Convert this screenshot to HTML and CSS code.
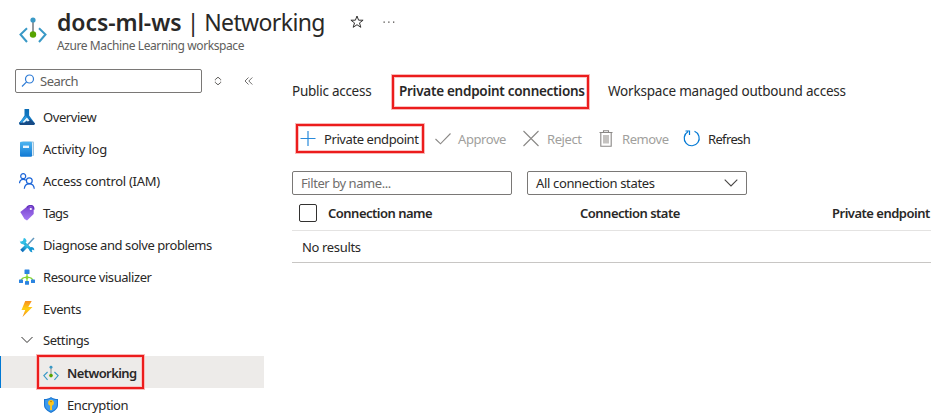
FILE: index.html
```html
<!DOCTYPE html>
<html lang="en">
<head>
<meta charset="utf-8">
<title>docs-ml-ws | Networking</title>
<link rel="stylesheet" href="styles.css">
</head>
<body>
<svg class="defs" width="0" height="0" aria-hidden="true">
  <defs>
    <linearGradient id="book" x1="0" y1="0" x2="0" y2="1"><stop offset="0" stop-color="#4cb4f0"/><stop offset="1" stop-color="#1079d4"/></linearGradient>
    <linearGradient id="flask" x1="0" y1="0" x2="0" y2="1"><stop offset="0" stop-color="#0a6cb5"/><stop offset="1" stop-color="#1c86d1"/></linearGradient>
    <linearGradient id="tag" x1="0" y1="0" x2="0" y2="1"><stop offset="0" stop-color="#7a45d0"/><stop offset="1" stop-color="#a67af4"/></linearGradient>
    <linearGradient id="bolt" x1="0" y1="0" x2="0" y2="1"><stop offset="0" stop-color="#f78d1e"/><stop offset=".5" stop-color="#ffd00f"/><stop offset="1" stop-color="#f78d1e"/></linearGradient>
    <linearGradient id="tool" x1="1" y1="0" x2="0" y2="1"><stop offset="0" stop-color="#32c8e8"/><stop offset="1" stop-color="#0b67b8"/></linearGradient>
    <symbol id="net" viewBox="0 0 28 28">
      <path d="M8 12.200 1.500 18.500 8 26M20 12.200l6.500 6.300L20 26" fill="none" stroke="#3999c6" stroke-width="2"/>
      <path d="M14 4v15" stroke="#8a8f94" stroke-width="1.800"/>
      <circle cx="14" cy="4" r="2.600" fill="#3999c6"/><circle cx="14" cy="18.500" r="3.200" fill="#57a300"/>
    </symbol>
  </defs>
</svg>
<div class="page">
  <header class="header">
    <svg class="header-icon" viewBox="0 0 28 28"><use href="#net"/></svg>
    <div class="heading">
      <h1><b>docs-ml-ws</b><span class="section"> | Networking</span></h1>
      <p>Azure Machine Learning workspace</p>
    </div>
    <svg class="star" viewBox="0 0 14 14"><path d="M7 1l1.600 4.200h4.500L9.500 7.900l1.300 4.400L7 9.700l-3.800 2.600 1.300-4.400L.9 5.200h4.500z"/></svg>
    <svg class="dots" viewBox="0 0 12 2"><path d="M.5 .5h1.300v1.300H.5zM5.200 .5h1.300v1.300H5.200zM10 .5h1.300v1.300H10z"/></svg>
  </header>
  <div class="body">
    <aside class="sidebar">
      <div class="search-row">
        <div class="search">
          <svg viewBox="0 0 14 14"><circle cx="8.500" cy="5" r="4"/><path d="M5.600 7.800 1 12.500"/></svg>
          <span>Search</span>
        </div>
        <svg class="sorter" viewBox="0 0 8 10"><path d="M1.300 4.300V3.500L4 1.200l2.700 2.300v.8M1.300 5.700v.8L4 8.800l2.700-2.300v-.8"/></svg>
        <svg class="collapse" viewBox="0 0 9 8"><path d="M4.500 .5 1 4l3.500 3.500M8.300 .5 4.800 4l3.500 3.500"/></svg>
      </div>
      <nav>
        <a class="item tight"><svg viewBox="0 0 16 16"><path d="M5.500 0h4.600v6.500L16 14.500 15 16H1l-1-1.500 5.500-8z" fill="url(#flask)"/><path d="M0 13.700 2 12l4 1.500 5-3.500 5 4.500L15 16H1z" fill="#174a85"/><path d="M3.200 13.200 7.800 8.200l2.800 3.600-2 .8-1-1.200-2.600 2.400z" fill="#e3f3fd"/><path d="M.6 13.200 6.500 7l1.700.9L2.600 14z" fill="#2b9be0"/></svg><span>Overview</span></a>
        <a class="item loose"><svg viewBox="0 0 16 16"><rect x="3" y=".5" width="12" height="14.500" rx="1" fill="#9cc3dd"/><rect x="3" y="1.500" width="10.800" height="13" fill="#e8f3fa"/><rect x="1" y=".8" width="12" height="15" rx="1" fill="url(#book)"/><rect x="4" y="4.600" width="6" height="2.400" fill="#eaf6ff"/></svg><span>Activity log</span></a>
        <a class="item iam"><svg viewBox="0 0 16 16"><g fill="none" stroke="#1b65d8" stroke-width="1.200"><circle cx="4.200" cy="3.200" r="2.500"/><path d="M.5 10.200C.7 7.700 2.200 6.300 4.200 6.300c1.100 0 2 .4 2.700 1"/><circle cx="10.300" cy="7.800" r="2.900"/><path d="M5.300 15.700c.3-3.200 2.300-4.900 5-4.900s4.700 1.700 5 4.900"/></g></svg><span>Access control (IAM)</span></a>
        <a class="item tags"><svg viewBox="0 0 16 16"><path d="M1.300 7 8.500 1.300h4.500L14.700 3v6L8 15.500 5.500 14z" fill="url(#tag)"/><path d="M8 2.500C9.500.2 12.500-.2 14 1.500c.8 1 .9 2 .7 3.200" fill="none" stroke="#6330bd" stroke-width="1.400"/><circle cx="11.800" cy="4" r="1.100" fill="#fff"/></svg><span>Tags</span></a>
        <a class="item tight"><svg viewBox="0 0 16 16"><path d="M3.500 4.500 12.500 13" stroke="#23addb" stroke-width="2.800"/><path d="M4.800 .9 4 3.800 1.500 4.700.8 3.500C.8 6.500 3 7.800 5.500 6.900L7.500 4.500C7.700 2.500 6.500 1.100 4.800 .9z" fill="#32bfe5"/><path d="M10.200 11.800 12 10c2.500 0 3.500 1.500 3.200 3.500L13.700 12.600l-1 1 .8 1.700c-2 .1-3.500-1.300-3.300-3.500z" fill="#1495d2"/><path d="M15 1 7.500 9" stroke="#6097bd" stroke-width="1.500"/><path d="M8.300 8.300 2.500 14" stroke="url(#tool)" stroke-width="3.500"/></svg><span>Diagnose and solve problems</span></a>
        <a class="item tight"><svg viewBox="0 0 16 16"><path d="M8 4.500v8M2 12c.2-2.700 2-3.500 6-3.800 4 .3 5.800 1.100 6 3.800" fill="none" stroke="#86d633" stroke-width="1.300"/><g fill="#2b84e0"><rect x="5.500" y=".5" width="5" height="4.500" rx=".5"/><rect x="0" y="10.500" width="4" height="3.500" rx=".5"/><rect x="6" y="12" width="4" height="3.700" rx=".5"/><rect x="12" y="10.500" width="4" height="3.500" rx=".5"/></g><circle cx="8" cy="8.600" r="1.500" fill="#86d633"/></svg><span>Resource visualizer</span></a>
        <a class="item"><svg viewBox="0 0 16 16"><path d="M6.200 0h6.500L9.300 6h4.200L3.500 16l2.700-7H2.500z" fill="url(#bolt)"/></svg><span>Events</span></a>
        <a class="item group tight"><svg viewBox="0 0 16 16"><path d="M2.500 5 8 10.500 13.500 5" fill="none" stroke="#323130" stroke-width="1"/></svg><span>Settings</span></a>
        <a class="item child active"><svg viewBox="0 0 28 28"><use href="#net"/></svg><span>Networking</span><i class="mark mark-nav"></i></a>
        <a class="item child tight"><svg viewBox="0 0 16 16"><path d="M8 0c2 1.600 4 2 7 2.100v6C15 12 11.500 14.500 8 16 4.500 14.500 1 12 1 8.100v-6C4 2 6 1.600 8 0z" fill="#1b76d1"/><path d="M8 1.300c1.800 1.300 3.600 1.700 5.900 1.800v5c0 3.200-2.800 5.300-5.900 6.600-3.100-1.300-5.900-3.400-5.900-6.600v-5c2.300-.1 4.100-.5 5.900-1.800z" fill="#3d9bee"/><circle cx="8" cy="5.800" r="2.900" fill="#ffc61a"/><path d="M7.100 8h1.900v4.300l-1 1-.9-1z" fill="#ffc61a"/><circle cx="8" cy="4.500" r=".8" fill="#b37400"/></svg><span>Encryption</span></a>
      </nav>
    </aside>
    <main class="main">
      <div class="tabs">
        <span class="tab">Public access</span>
        <span class="tab selected"><span>Private endpoint connections</span><i class="mark mark-tab"></i></span>
        <span class="tab">Workspace managed outbound access</span>
      </div>
      <div class="toolbar">
        <span class="cmd c1"><svg viewBox="0 0 18 18"><path d="M9 1v15M1.500 8.500h15" stroke="#2a8bdb" stroke-width="1.200"/></svg><span>Private endpoint</span><i class="mark mark-cmd"></i></span>
        <span class="cmd c2 off"><svg viewBox="0 0 18 18"><path d="M1.500 9 6.500 13.800 16.500 3.500"/></svg><span>Approve</span></span>
        <span class="cmd c3 off"><svg viewBox="0 0 18 18"><path d="M1.500 1l15 15M16.500 1l-15 15"/></svg><span>Reject</span></span>
        <span class="cmd c4 off"><svg viewBox="0 0 18 18"><path d="M2.500 2.500h13M6.500 2.300V.7h5v1.600M3.800 2.700v13.600h10.400V2.700"/><path d="M6 5h6v8.500H6z" fill="#c4c2c0" stroke="none"/></svg><span>Remove</span></span>
        <span class="cmd c5"><svg viewBox="0 0 18 18"><path d="M4.900 1.800A7.500 7.500 0 1 0 11.500 1.300M2.500 1h4v4" fill="none" stroke="#0078d4" stroke-width="1.200"/></svg><span>Refresh</span></span>
      </div>
      <div class="filters">
        <div class="field name"><span>Filter by name...</span></div>
        <div class="field state"><span>All connection states</span><svg viewBox="0 0 14 8"><path d="M.7 .7 7 7 13.300 .7"/></svg></div>
      </div>
      <div class="grid">
        <div class="grid-head">
          <i class="check"></i>
          <span class="col">Connection name</span><span class="col">Connection state</span><span>Private endpoint</span>
        </div>
        <div class="grid-row"><span>No results</span></div>
      </div>
    </main>
  </div>
</div>
</body>
</html>
```
FILE: styles.css
```css
* { box-sizing: border-box; }
body { margin: 0; background: #fff; color: #292827; font: 13px/18px "Noto Sans", "Open Sans", sans-serif; letter-spacing: -0.35px; overflow: hidden; }
svg { display: block; flex: none; }
.defs { position: absolute; }
.page { width: 931px; height: 417px; overflow: hidden; }
span { white-space: nowrap; }

.header { display: flex; height: 61px; padding-left: 19px; }
.header-icon { width: 28px; height: 28px; margin-top: 16px; }
.heading { width: 293px; margin-left: 10px; padding-top: 7px; }
.heading h1 { margin: 0; font-size: 23px; line-height: 30px; font-weight: 400; white-space: nowrap; }
.heading h1 b { font-weight: 600; letter-spacing: -0.08px; }
.section { letter-spacing: -0.62px; }
.heading p { margin: 0; color: #605e5c; font-size: 12px; line-height: 18px; letter-spacing: -0.41px; }
.star { width: 14px; height: 14px; margin-top: 15px; fill: none; stroke: #323130; stroke-width: 1; }
.dots { width: 12px; height: 2px; margin: 21px 0 0 19px; fill: #484644; }

.body { display: flex; }
.sidebar { width: 264px; flex: none; }
.search-row { display: flex; align-items: center; height: 40px; padding: 0 0 1px 15px; }
.search { display: flex; align-items: center; width: 187px; height: 24px; border: 1px solid #7a7876; border-radius: 2px; padding-left: 5px; color: #605e5c; letter-spacing: -0.5px; }
.search svg { width: 14px; height: 14px; margin-right: 5px; fill: none; stroke: #2f7cd6; stroke-width: 1.2; }
.sorter { width: 8px; height: 10px; margin-left: 12px; fill: none; stroke: #605e5c; }
.collapse { width: 9px; height: 8px; margin-left: 22px; fill: none; stroke: #605e5c; stroke-width: .9; }
.item { display: flex; align-items: center; height: 32px; padding-left: 19px; position: relative; }
.item svg { width: 16px; height: 16px; margin-right: 8px; }
.tight { letter-spacing: -0.43px; }
.loose { letter-spacing: -0.2px; }
.iam { letter-spacing: -0.3px; }
.tags { letter-spacing: -0.7px; }
.group { height: 31px; padding-bottom: 1px; }
.child { padding-left: 43px; padding-top: 2px; }
.active { background: #edebe9; font-weight: 600; letter-spacing: -0.58px; box-shadow: inset 1px 0 #0078d4; }
.mark { position: absolute; border: 2px solid #ec1c1c; box-shadow: 0 0 0 1px #f9b9b9, inset 0 0 0 1px #f9c4c4; }
.mark-nav { left: 37px; top: -1px; width: 107px; height: 34px; }

.main { flex: 1; min-width: 0; padding-left: 28px; overflow: hidden; }
.tabs { display: flex; height: 61px; padding-top: 14px; font-size: 13.5px; letter-spacing: -0.27px; }
.tab { position: relative; height: 34px; padding-top: 7px; }
.tab:nth-child(1) { width: 107px; }
.tab:nth-child(2) { width: 209px; }
.tab:nth-child(3) { letter-spacing: -0.2px; }
.selected { font-weight: 600; }
.selected > span { display: block; width: 185px; height: 25px; border-bottom: 1px solid #7d5aa8; }
.mark-tab { left: -7px; top: 0; width: 197px; height: 34px; }
.toolbar { display: flex; height: 34px; padding-left: 7px; letter-spacing: -0.42px; }
.cmd { position: relative; display: flex; align-items: center; height: 34px; }
.cmd svg { width: 18px; height: 18px; margin-right: 7px; }
.off { color: #a19f9d; }
.off svg { fill: none; stroke: #8a8886; stroke-width: 1.1; }
.c1 { width: 135px; }
.c2 { width: 88px; }
.c2 svg { margin-right: 6px; }
.c3 { width: 75px; }
.c4 { width: 86px; }
.c5 { letter-spacing: -0.65px; }
.mark-cmd { left: -3px; top: 2px; width: 128px; height: 29px; }

.filters { display: flex; gap: 15px; height: 39px; padding-top: 15px; }
.field { display: flex; align-items: center; justify-content: space-between; height: 24px; border: 1px solid #7a7876; border-radius: 2px; padding: 0 8px; }
.name { width: 220px; color: #706e6c; letter-spacing: -0.44px; }
.state { width: 220px; }
.state svg { width: 14px; height: 8px; fill: none; stroke: #484644; stroke-width: 1.1; }
.grid-head { display: flex; align-items: center; height: 36px; padding: 0 0 0 7px; border-bottom: 1px solid #e4e3e2; font-weight: 600; letter-spacing: -0.5px; }
.check { width: 18px; height: 18px; border: 1px solid #323130; border-radius: 2px; margin-right: 11px; flex: none; }
.col { flex: none; width: 252px; }
.grid-row { display: flex; align-items: center; height: 32px; padding-left: 10px; border-bottom: 1px solid #c8c6c4; }
```
